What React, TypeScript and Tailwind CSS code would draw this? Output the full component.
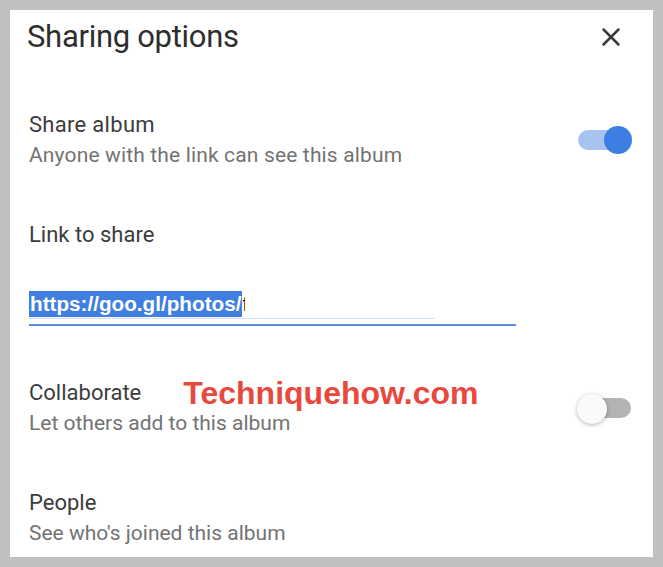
import { X } from "lucide-react";

type ToggleProps = {
  on: boolean;
};

function Toggle({ on }: ToggleProps) {
  if (on) {
    return (
      <div className="relative w-[58px] h-[30px] flex items-center">
        <div className="ml-[4px] w-[48px] h-[20px] rounded-full bg-[#a9c3f0]" />
        <div className="absolute right-[0px] top-[1px] w-[28px] h-[28px] rounded-full bg-[#3c7ee2] blur-[0.5px]" />
      </div>
    );
  }

  return (
    <div className="relative w-[58px] h-[30px] flex items-center">
      <div className="ml-[10px] w-[46px] h-[20px] rounded-full bg-[#b3b3b3]" />
      <div className="absolute left-[2px] top-[1px] w-[30px] h-[30px] rounded-full bg-[#fafafa] shadow-[0_1px_4px_rgba(0,0,0,0.3)]" />
    </div>
  );
}

export default function App() {
  return (
    <div className="w-[663px] h-[567px] bg-[#c0c0c0] p-[10px] font-['Roboto',sans-serif]">
      <div className="w-full h-full bg-white px-[19px] flex flex-col">
        <div className="flex items-center justify-between h-[52px] mt-[1px]">
          <h1 className="text-[31px] leading-[34px] text-[#2e2e2e] -ml-[2px] tracking-[-0.3px]">Sharing options</h1>
          <X size={30} strokeWidth={2} className="text-[#3a3a3a] mr-[8px]" />
        </div>

        <div className="flex items-center justify-between mt-[47px] pr-[2px]">
          <div className="flex flex-col">
            <div className="text-[22px] leading-[30px] text-[#3c3c3c] tracking-[0.3px]">Share album</div>
            <div className="text-[21px] leading-[30px] text-[#737373] tracking-[0.15px]">Anyone with the link can see this album</div>
          </div>
          <Toggle on />
        </div>

        <div className="mt-[50px] text-[22px] leading-[30px] text-[#3c3c3c]">Link to share</div>

        <div className="mt-[41px] flex flex-col w-[487px]">
          <div className="flex items-center h-[26px]">
            <span className="h-[26px] px-[1px] bg-[#3f7fe0] text-white font-['Liberation_Sans',Arial,sans-serif] font-bold text-[20.7px] leading-[26px]">
              https://goo.gl/photos/
            </span>
            <span className="w-[3px] h-[16px] overflow-hidden text-black font-['Liberation_Sans',Arial,sans-serif] text-[21px] leading-[16px]">
              f
            </span>
          </div>
          <div className="mt-[1px] w-[406px] h-px bg-[#cfe3fb]" />
          <div className="mt-[5px] w-full h-[2px] bg-[#5a8ddb]" />
        </div>

        <div className="flex items-center justify-between mt-[52px] pr-[1px]">
          <div className="flex flex-col">
            <div className="flex items-center h-[30px]">
              <span className="text-[22px] leading-[30px] text-[#3c3c3c]">Collaborate</span>
              <span className="ml-[42px] text-[32px] leading-[34px] font-bold text-[#e8483e] font-['Liberation_Sans',Arial,sans-serif]">
                Techniquehow.com
              </span>
            </div>
            <div className="text-[21px] leading-[30px] text-[#737373]">Let others add to this album</div>
          </div>
          <Toggle on={false} />
        </div>

        <div className="mt-[50px] flex flex-col">
          <div className="text-[22px] leading-[30px] text-[#3c3c3c]">People</div>
          <div className="text-[21px] leading-[30px] text-[#737373]">See who's joined this album</div>
        </div>
      </div>
    </div>
  );
}
